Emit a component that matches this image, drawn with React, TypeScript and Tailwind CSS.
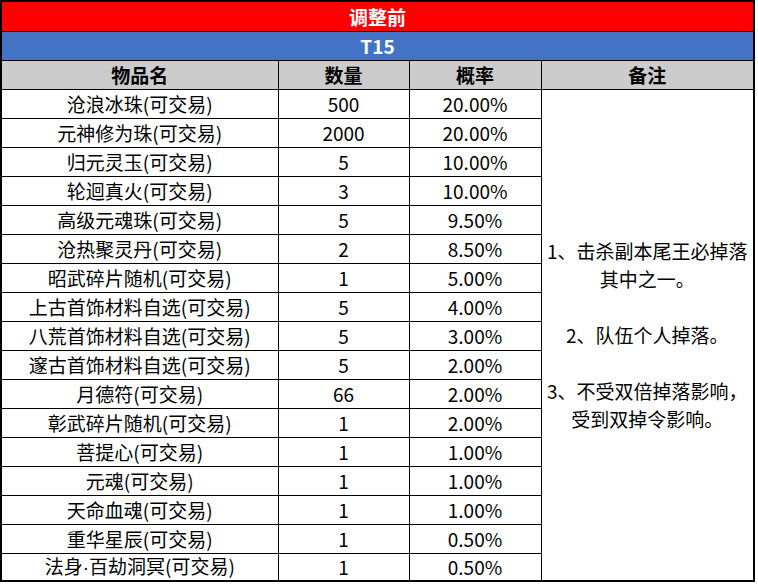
import type { JSX } from 'react';

const rows: [string, string, string][] = [
  ['沧浪冰珠(可交易)', '500', '20.00%'],
  ['元神修为珠(可交易)', '2000', '20.00%'],
  ['归元灵玉(可交易)', '5', '10.00%'],
  ['轮迴真火(可交易)', '3', '10.00%'],
  ['高级元魂珠(可交易)', '5', '9.50%'],
  ['沧热聚灵丹(可交易)', '2', '8.50%'],
  ['昭武碎片随机(可交易)', '1', '5.00%'],
  ['上古首饰材料自选(可交易)', '5', '4.00%'],
  ['八荒首饰材料自选(可交易)', '5', '3.00%'],
  ['邃古首饰材料自选(可交易)', '5', '2.00%'],
  ['月德符(可交易)', '66', '2.00%'],
  ['彰武碎片随机(可交易)', '1', '2.00%'],
  ['菩提心(可交易)', '1', '1.00%'],
  ['元魂(可交易)', '1', '1.00%'],
  ['天命血魂(可交易)', '1', '1.00%'],
  ['重华星辰(可交易)', '1', '0.50%'],
  ['法身·百劫洞冥(可交易)', '1', '0.50%'],
];

const cell = 'border border-black p-0 text-center align-middle';

// the CJK font draws the middle dot full width; the sheet shows a narrow one
function ItemName({ name }: { name: string }): JSX.Element {
  const parts = name.split('·');
  if (parts.length === 1) return <>{name}</>;
  return (
    <>
      {parts[0]}
      <span style={{ fontFamily: '"Liberation Sans", sans-serif' }}>·</span>
      {parts[1]}
    </>
  );
}

export default function App(): JSX.Element {
  return (
    <div
      className="bg-white w-[758px] h-[585px] text-black text-[19px]"
      style={{ fontFamily: '"Microsoft YaHei", "Noto Sans CJK SC", sans-serif' }}
    >
      <table className="w-[755px] table-fixed border-collapse border-2 border-black leading-none">
        <colgroup>
          <col className="w-[277px]" />
          <col className="w-[131px]" />
          <col className="w-[132px]" />
          <col />
        </colgroup>
        <tbody>
          <tr className="h-[30px]">
            <td colSpan={4} className={`${cell} bg-[#ff0000] font-bold text-white`}>
              调整前
            </td>
          </tr>
          <tr className="h-[29px]">
            <td colSpan={4} className={`${cell} bg-[#4472c4] font-bold text-white`}>
              T15
            </td>
          </tr>
          <tr className="h-[29px] bg-[#cdcccc] font-bold">
            <td className={cell}>物品名</td>
            <td className={cell}>数量</td>
            <td className={cell}>概率</td>
            <td className={cell}>备注</td>
          </tr>
          {rows.map(([name, qty, rate], i) => (
            <tr key={name} className={i === rows.length - 1 ? 'h-[28px]' : 'h-[29px]'}>
              <td className={cell}>
                <ItemName name={name} />
              </td>
              <td className={cell}>{qty}</td>
              <td className={cell}>{rate}</td>
              {i === 0 && (
                <td rowSpan={rows.length} className={`${cell} leading-[28px]`}>
                  <div>1、击杀副本尾王必掉落</div>
                  <div>其中之一。</div>
                  <div>&nbsp;</div>
                  <div>2、队伍个人掉落。</div>
                  <div>&nbsp;</div>
                  <div>3、不受双倍掉落影响，</div>
                  <div>受到双掉令影响。</div>
                </td>
              )}
            </tr>
          ))}
        </tbody>
      </table>
    </div>
  );
}
